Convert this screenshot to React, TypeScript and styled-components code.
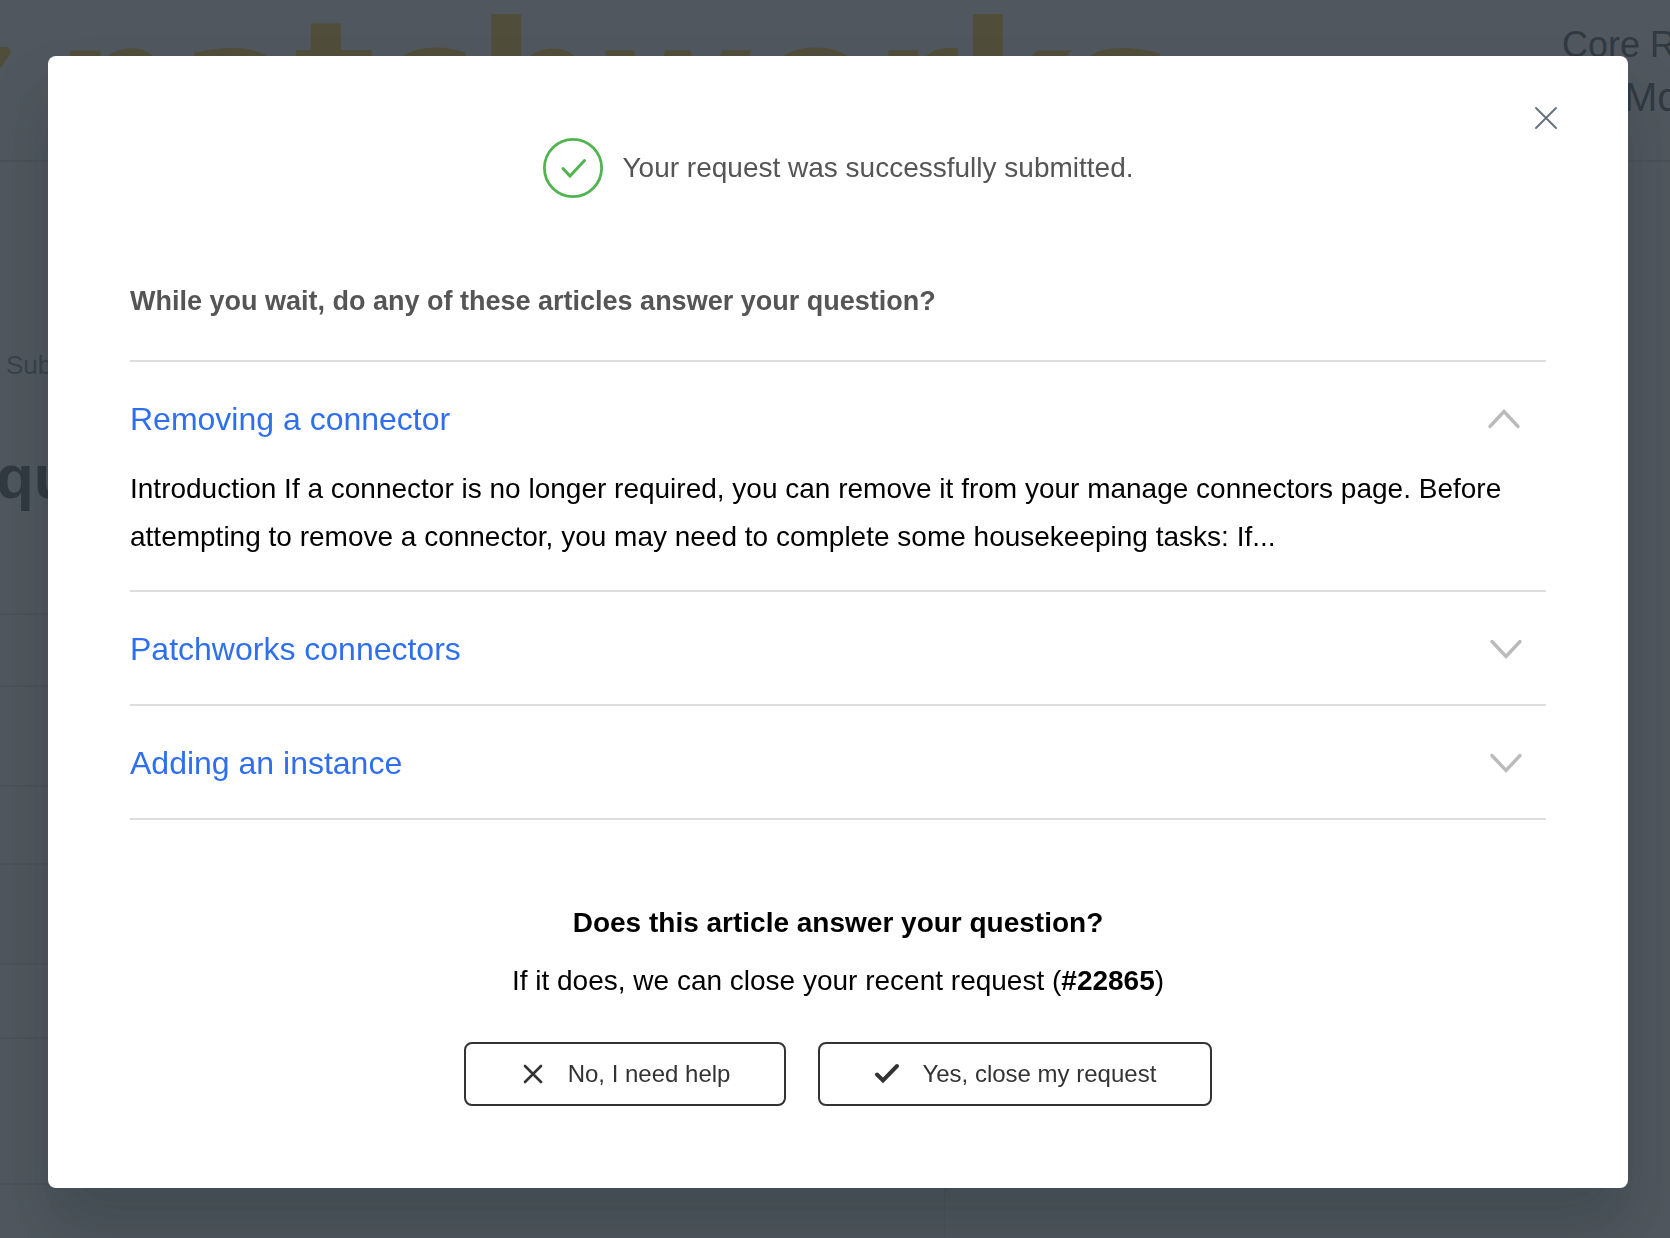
import React, { useState } from "react";
import styled, { createGlobalStyle } from "styled-components";

const GlobalStyle = createGlobalStyle`
  *, *::before, *::after { box-sizing: border-box; }
  body {
    margin: 0;
    background: #fff;
    color: #2f3941;
    font-family: "Liberation Sans", Arial, Helvetica, sans-serif;
    font-size: 28px;
    line-height: 48px;
  }
  h1, h2, h3, p, ul { margin: 0; padding: 0; }
  button { font-family: inherit; cursor: pointer; }
`;

const Page = styled.div`
  min-height: 100vh;
  overflow: hidden;
`;

const Header = styled.header`
  display: flex;
  justify-content: space-between;
  height: 162px;
  border-bottom: 2px solid #ddd;
  white-space: nowrap;
`;

const Brand = styled.div`
  display: flex;
  gap: 44px;
  color: #ffc20e;
  font: bold 171px / 170px "DejaVu Sans", sans-serif;
`;

const BrandMark = styled.svg`
  width: 12px;
  height: 160px;
`;

const HeaderLinks = styled.nav`
  display: flex;
  flex-direction: column;
  align-items: flex-end;
  padding-top: 19px;
  line-height: 52px;
`;

const HeaderLink = styled.a<{ $large?: boolean }>`
  width: ${(p) => (p.$large ? "46px" : "108px")};
  overflow: hidden;
  color: inherit;
  text-decoration: none;
  font-size: ${(p) => (p.$large ? "40px" : "36px")};
`;

const Breadcrumb = styled.p`
  padding: 179px 6px 0;
  color: #68737d;
  font-size: 26px;
  line-height: 48px;
`;

const PageTitle = styled.h1`
  margin-left: -4px;
  padding-top: 48px;
  font-size: 62px;
  line-height: 80px;
`;

const Fields = styled.div`
  display: grid;
  grid-template-columns: 945px 1fr;
  padding-top: 96px;
`;

const FieldColumn = styled.div`
  border-right: 1px solid #ddd;
`;

const Field = styled.div<{ $height: number; $shaded?: boolean }>`
  height: ${(p) => p.$height}px;
  border-top: 2px solid #ddd;
  background: ${(p) => (p.$shaded ? "#f3f3f3" : "transparent")};
`;

const Overlay = styled.div`
  position: fixed;
  inset: 0;
  padding: 56px 42px 50px 48px;
  background: rgba(49, 57, 66, 0.85);
  overflow: auto;
`;

const Dialog = styled.section`
  position: relative;
  padding: 82px;
  border-radius: 8px;
  background: #fff;
  box-shadow: 0 40px 56px rgba(23, 38, 45, 0.25);
  color: #000;
`;

const CloseButton = styled.button`
  position: absolute;
  top: 22px;
  right: 42px;
  display: grid;
  place-items: center;
  width: 80px;
  height: 80px;
  padding: 0;
  border: 0;
  background: none;
  color: #68737d;
`;

const Success = styled.div`
  display: flex;
  align-items: center;
  justify-content: center;
  gap: 20px;
  color: #555;
`;

const SuccessIcon = styled.svg`
  width: 60px;
  height: 60px;
`;

const Lead = styled.h2`
  margin: 79px 0 35px;
  color: #555;
  font-size: 27px;
  line-height: 48px;
`;

const Articles = styled.ul`
  border-bottom: 2px solid #ddd;
  list-style: none;
`;

const Article = styled.li<{ $open: boolean }>`
  padding: 33px 0 ${(p) => (p.$open ? "29px" : "31px")};
  border-top: 2px solid #ddd;
`;

const ArticleToggle = styled.button`
  display: flex;
  align-items: center;
  justify-content: space-between;
  width: 100%;
  padding: 0 23px 0 0;
  border: 0;
  background: none;
  color: #2f6fed;
  font-size: 32px;
  line-height: 48px;
  text-align: left;
`;

const Chevron = styled.svg<{ $open: boolean }>`
  width: 36px;
  height: 22px;
  color: #bbb;
  transform: ${(p) => (p.$open ? "rotate(180deg)" : "none")};
`;

const ArticleText = styled.p`
  padding-top: 22px;
`;

const Feedback = styled.div`
  display: flex;
  flex-direction: column;
  align-items: center;
  gap: 10px;
  padding-top: 79px;
  text-align: center;
`;

const Question = styled.h3`
  font-size: 28px;
  line-height: 48px;
`;

const Actions = styled.div`
  display: flex;
  justify-content: center;
  gap: 32px;
  padding-top: 27px;
`;

const ActionButton = styled.button`
  display: flex;
  align-items: center;
  gap: 22px;
  height: 64px;
  padding: 0 54px;
  border: 2px solid #333;
  border-radius: 8px;
  background: #fff;
  color: #333;
  font-size: 24px;
`;

const articles = [
  {
    title: "Removing a connector",
    text: "Introduction If a connector is no longer required, you can remove it from your manage connectors page. Before attempting to remove a connector, you may need to complete some housekeeping tasks: If...",
  },
  { title: "Patchworks connectors", text: "" },
  { title: "Adding an instance", text: "" },
];

const fields = [
  { height: 72 },
  { height: 100 },
  { height: 78 },
  { height: 100, shaded: true },
  { height: 74 },
  { height: 146 },
  { height: 56 },
];

export default function App() {
  const [open, setOpen] = useState(0);

  return (
    <>
      <GlobalStyle />
      <Page aria-hidden="true">
        <Header>
          <Brand>
            <BrandMark viewBox="0 0 12 160">
              <path d="M0 47H6Q12 48 10 54L0 69Z" fill="currentColor" />
            </BrandMark>
            patchworks
          </Brand>
          <HeaderLinks>
            <HeaderLink href="#core" tabIndex={-1}>Core R</HeaderLink>
            <HeaderLink href="#more" tabIndex={-1} $large>Mo</HeaderLink>
          </HeaderLinks>
        </Header>
        <Breadcrumb>Sub</Breadcrumb>
        <PageTitle>qu</PageTitle>
        <Fields>
          <FieldColumn>
            {fields.map((f, i) => (
              <Field key={i} $height={f.height} $shaded={f.shaded} />
            ))}
          </FieldColumn>
        </Fields>
      </Page>
      <Overlay>
        <Dialog role="dialog" aria-modal="true" aria-labelledby="dialog-status">
          <CloseButton type="button" aria-label="Close">
            <svg width="24" height="24" viewBox="0 0 24 24" fill="none" stroke="currentColor" strokeWidth="2" strokeLinecap="round">
              <path d="M2 2L22 22M22 2L2 22" />
            </svg>
          </CloseButton>
          <Success>
            <SuccessIcon viewBox="0 0 60 60" fill="none" stroke="#52b451" aria-hidden="true">
              <circle cx="30" cy="30" r="28.6" strokeWidth="2.8" />
              <path d="M20 30.5L27 38L41.500 22.500" strokeWidth="3" strokeLinecap="round" />
            </SuccessIcon>
            <p id="dialog-status">Your request was successfully submitted.</p>
          </Success>
          <Lead>While you wait, do any of these articles answer your question?</Lead>
          <Articles>
            {articles.map((a, i) => (
              <Article key={a.title} $open={open === i}>
                <ArticleToggle type="button" aria-expanded={open === i} onClick={() => setOpen(open === i ? -1 : i)}>
                  {a.title}
                  <Chevron $open={open === i} viewBox="0 0 36 22" fill="none" stroke="currentColor" strokeWidth="3.4" strokeLinecap="round" aria-hidden="true">
                    <path d="M5 3.500L19 18.500L33 3.500" />
                  </Chevron>
                </ArticleToggle>
                {open === i && a.text && <ArticleText>{a.text}</ArticleText>}
              </Article>
            ))}
          </Articles>
          <Feedback>
            <Question>Does this article answer your question?</Question>
            <p>
              If it does, we can close your recent request (<strong>#22865</strong>)
            </p>
            <Actions>
              <ActionButton type="button">
                <svg width="26" height="24" viewBox="0 0 26 24" fill="none" stroke="currentColor" strokeWidth="2.6" strokeLinecap="round" aria-hidden="true">
                  <path d="M5 4L21 20M21 4L5 20" />
                </svg>
                No, I need help
              </ActionButton>
              <ActionButton type="button">
                <svg width="26" height="24" viewBox="0 0 26 24" fill="none" stroke="currentColor" strokeWidth="4" strokeLinecap="round" aria-hidden="true">
                  <path d="M3 12.500L9 18.500L23 4" />
                </svg>
                Yes, close my request
              </ActionButton>
            </Actions>
          </Feedback>
        </Dialog>
      </Overlay>
    </>
  );
}
